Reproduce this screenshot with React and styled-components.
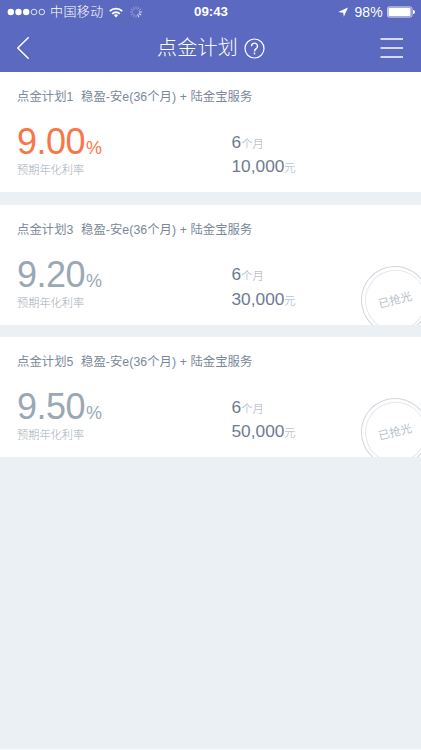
import React from "react";
import styled, { createGlobalStyle } from "styled-components";

const Global = createGlobalStyle`
  * { box-sizing: border-box; }
  body {
    margin: 0;
    background: #ebf0f4;
    font-family: "Liberation Sans", "Noto Sans CJK SC", sans-serif;
  }
`;

const Screen = styled.div`
  width: 421px;
  height: 750px;
  overflow: hidden;
  background: #ebf0f4;
  border-bottom: 1px solid #f8fafc;
`;

const Header = styled.header`
  height: 72px;
  background: #5b69c0;
  color: #fff;
`;

const StatusBar = styled.div`
  display: grid;
  grid-template-columns: 1fr auto 1fr;
  align-items: center;
  height: 24px;
  padding: 0 6px 0 7px;
  font-size: 13px;
  line-height: 24px;
`;

const StatusGroup = styled.div`
  display: flex;
  align-items: center;
  justify-content: ${(p) => (p.$end ? "flex-end" : "flex-start")};
  height: 24px;
`;

const Carrier = styled.span`
  margin: 0 5px 0 4px;
  font-size: 13px;
  font-weight: 300;
  letter-spacing: 0.4px;
  white-space: nowrap;
`;

const Clock = styled.span`
  font-size: 13.3px;
  font-weight: 700;
`;

const BatteryText = styled.span`
  margin: 0 4px 0 5px;
  font-size: 14px;
  letter-spacing: 0.2px;
`;

const Spinner = styled.svg`
  margin-left: 6px;
  opacity: 0.8;
`;

const NavBar = styled.div`
  display: grid;
  grid-template-columns: 1fr auto 1fr;
  align-items: center;
  height: 48px;
  padding: 0 17px;
`;

const Title = styled.h1`
  display: flex;
  align-items: center;
  gap: 6px;
  margin: 0;
  padding-left: 1px;
  font-size: 20px;
  font-weight: 300;
  line-height: 48px;
  letter-spacing: 0.2px;
`;

const MenuIcon = styled.svg`
  justify-self: end;
`;

const List = styled.main`
  display: flex;
  flex-direction: column;
  gap: 12.5px;
`;

const Card = styled.article`
  position: relative;
  height: 120px;
  overflow: hidden;
  padding: 13px 17px 0;
  background: #fff;
`;

const PlanName = styled.h2`
  display: flex;
  margin: 0;
  height: 24px;
  font-size: 12.3px;
  font-weight: 400;
  line-height: 24px;
  letter-spacing: 0.08px;
  color: #7b8899;
  white-space: pre;
`;

const PlanTitle = styled.span`
  width: 64px;
`;

const Columns = styled.div`
  display: grid;
  grid-template-columns: 214.5px 1fr;
`;

const RateBlock = styled.div`
  padding-top: 13px;
`;

const Rate = styled.div`
  display: flex;
  align-items: baseline;
  height: 39px;
  font-size: 36px;
  line-height: 40px;
  letter-spacing: -0.55px;
  color: ${(p) => (p.$active ? "#f8774a" : "#9aa8b4")};
`;

const Percent = styled.span`
  margin-left: 1px;
  font-size: 18px;
`;

const Caption = styled.div`
  height: 18px;
  font-size: 11.2px;
  font-weight: 300;
  line-height: 18px;
  color: #a3acb7;
`;

const Facts = styled.div`
  padding-top: 20.5px;
`;

const Fact = styled.div`
  display: flex;
  align-items: baseline;
  height: 24.5px;
  font-size: 17.3px;
  line-height: 25px;
  color: #6d7b92;
`;

const Unit = styled.span`
  font-size: 11.3px;
  font-weight: 300;
  color: #a3acb7;
`;

const Stamp = styled.div`
  position: absolute;
  top: 61px;
  left: 361px;
  display: grid;
  place-items: center;
  width: 68px;
  height: 68px;
  border: 1.5px solid #d2d7de;
  border-radius: 50%;
  transform: rotate(-14deg);

  &::before {
    content: "";
    position: absolute;
    inset: 2.5px;
    border: 1px solid #e5e8ed;
    border-radius: 50%;
  }
`;

const StampText = styled.span`
  font-size: 11.3px;
  font-weight: 400;
  line-height: 16px;
  color: #b6bfca;
`;

const SignalDots = () => (
  <svg width="39" height="10" viewBox="0 0 39 10" fill="#fff">
    <circle cx="3.8" cy="5" r="3.2" />
    <circle cx="11.5" cy="5" r="3.2" />
    <circle cx="19.2" cy="5" r="3.2" />
    <circle cx="27" cy="5" r="2.8" fill="none" stroke="#fff" strokeWidth="0.8" />
    <circle cx="34.8" cy="5" r="2.8" fill="none" stroke="#fff" strokeWidth="0.8" />
  </svg>
);

const Wifi = () => (
  <svg width="14" height="11" viewBox="0 0 14 11" fill="none" stroke="#fff">
    <path d="M0.8 4.2a8.8 8.8 0 0 1 12.4 0" strokeWidth="1.9" />
    <path d="M3.2 6.8a5.4 5.4 0 0 1 7.6 0" strokeWidth="1.8" />
    <path d="M7 10.5 4.9 8.3a3 3 0 0 1 4.2 0z" fill="#fff" stroke="none" />
  </svg>
);

const Activity = () => (
  <Spinner width="14" height="14" viewBox="-7 -7 14 14" stroke="#fff" strokeWidth="1">
    {Array.from({ length: 12 }, (_, i) => (
      <path
        key={i}
        d="M0 -3V-6"
        transform={`rotate(${i * 30})`}
        opacity={i > 2 && i < 6 ? 1 : 0.4}
      />
    ))}
  </Spinner>
);

const plans = [
  { id: 1, rate: "9.00", amount: "10,000", active: true },
  { id: 3, rate: "9.20", amount: "30,000", active: false },
  { id: 5, rate: "9.50", amount: "50,000", active: false },
];

const PlanCard = ({ plan }) => (
  <Card>
    <PlanName>
      <PlanTitle>点金计划{plan.id}</PlanTitle>
      <span>稳盈-安e(36个月) + 陆金宝服务</span>
    </PlanName>
    <Columns>
      <RateBlock>
        <Rate $active={plan.active}>
          {plan.rate}
          <Percent>%</Percent>
        </Rate>
        <Caption>预期年化利率</Caption>
      </RateBlock>
      <Facts>
        <Fact>
          6<Unit>个月</Unit>
        </Fact>
        <Fact>
          {plan.amount}
          <Unit>元</Unit>
        </Fact>
      </Facts>
    </Columns>
    {!plan.active && (
      <Stamp>
        <StampText>已抢光</StampText>
      </Stamp>
    )}
  </Card>
);

export default function App() {
  return (
    <Screen>
      <Global />
      <Header>
        <StatusBar>
          <StatusGroup>
            <SignalDots />
            <Carrier>中国移动</Carrier>
            <Wifi />
            <Activity />
          </StatusGroup>
          <Clock>09:43</Clock>
          <StatusGroup $end>
            <svg width="11" height="10" viewBox="0 0 11 10" fill="#fff">
              <path d="M10 0.4 5.8 9.8 5.2 5.8 0.2 5z" />
            </svg>
            <BatteryText>98%</BatteryText>
            <svg width="28" height="12" viewBox="0 0 28 12" fill="#fff">
              <rect x="0.4" y="0.9" width="24.6" height="10.2" rx="1.8" fill="none" stroke="#fff" strokeWidth="0.7" />
              <rect x="1.4" y="1.8" width="22.2" height="8.4" rx="1" />
              <path d="M26 4a2 2 0 0 1 0 4z" />
            </svg>
          </StatusGroup>
        </StatusBar>
        <NavBar>
          <svg width="14" height="24" viewBox="0 0 14 24" fill="none" stroke="#fff" strokeWidth="1.5">
            <path d="M11.7 1.2 0.8 12 11.7 22.8" />
          </svg>
          <Title>
            点金计划
            <svg width="21" height="21" viewBox="0 0 21 21" fill="none" stroke="#fff" strokeWidth="1.2">
              <circle cx="10.5" cy="10.5" r="9.5" />
              <path d="M7.5 8.3a3 3 0 1 1 4.9 2.2c-1.2.9-1.9 1.3-1.9 2.9" strokeWidth="1.4" />
              <path d="M10.5 14.6v1.7" strokeWidth="1.5" />
            </svg>
          </Title>
          <MenuIcon width="24" height="22" viewBox="0 0 24 22" stroke="#fff" strokeWidth="1.6">
            <path d="M0.5 2H23M0.5 11H23M0.5 20H23" />
          </MenuIcon>
        </NavBar>
      </Header>
      <List>
        {plans.map((plan) => (
          <PlanCard key={plan.id} plan={plan} />
        ))}
      </List>
    </Screen>
  );
}
